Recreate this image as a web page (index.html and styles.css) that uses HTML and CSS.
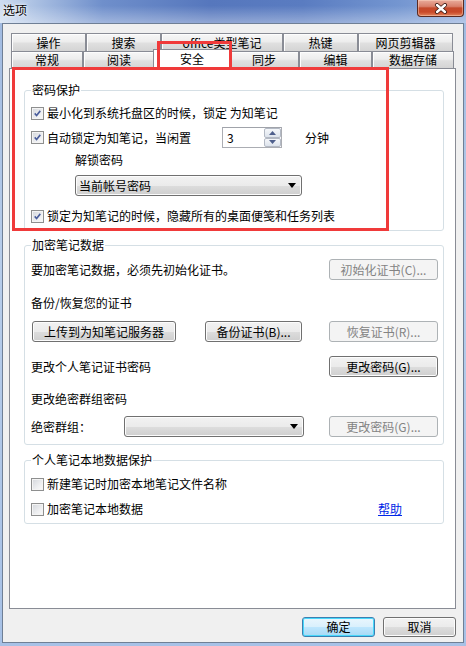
FILE: index.html
```html
<!DOCTYPE html>
<html lang="zh-CN">
  <head>
    <meta charset="UTF-8" />
    <title>选项</title>
    <link rel="stylesheet" href="styles.css">
  </head>
  <body>
    <div class="window">
      <div class="titlebar">
        <span class="title">选项</span>
        <div class="close">
          <svg width="14" height="11" viewBox="0 0 14 11">
            <path d="M3 2 L11 9 M11 2 L3 9" stroke="#3a1a14" stroke-width="4" stroke-linecap="round" />
            <path d="M3 2 L11 9 M11 2 L3 9" stroke="#ffffff" stroke-width="2.4" stroke-linecap="round" />
          </svg>
        </div>
      </div>

      <div class="client">
        <div class="tabrow row-back">
          <div class="tab t-op">操作</div>
          <div class="tab t-search">搜索</div>
          <div class="tab t-office">office类型笔记</div>
          <div class="tab t-hotkey">热键</div>
          <div class="tab t-clip">网页剪辑器</div>
        </div>
        <div class="tabrow row-front">
          <div class="tab t-general">常规</div>
          <div class="tab t-read">阅读</div>
          <div class="tab t-safe active">安全</div>
          <div class="tab t-sync">同步</div>
          <div class="tab t-edit">编辑</div>
          <div class="tab t-store">数据存储</div>
        </div>

        <div class="panel">
          <fieldset class="group g-lock">
            <legend>密码保护</legend>
            <div class="row r1">
              <span class="cb checked"><svg viewBox="0 0 13 13"><path d="M3.2 6.4 L5.4 8.8 L9.8 3.4" /></svg></span>
              <span class="cb-text">最小化到系统托盘区的时候，锁定 为知笔记</span>
            </div>
            <div class="row r2">
              <div class="idle-label">
                <span class="cb checked"><svg viewBox="0 0 13 13"><path d="M3.2 6.4 L5.4 8.8 L9.8 3.4" /></svg></span>
                <span class="cb-text">自动锁定为知笔记，当闲置</span>
              </div>
              <div class="spinner">
                <span class="spin-value">3</span>
                <div class="spin-buttons">
                  <span class="spin-btn"><svg width="7" height="4" viewBox="0 0 7 4"><path d="M0 4 L3.5 0 L7 4 Z" fill="#4e5f8c" /></svg></span>
                  <span class="spin-btn"><svg width="7" height="4" viewBox="0 0 7 4"><path d="M0 0 L3.5 4 L7 0 Z" fill="#4e5f8c" /></svg></span>
                </div>
              </div>
              <span class="minutes">分钟</span>
            </div>
            <div class="row r3">解锁密码</div>
            <div class="row r4">
              <div class="select sel-unlock">
                <span>当前帐号密码</span>
                <svg width="8" height="5" viewBox="0 0 8 5"><path d="M0 0 L8 0 L4 5 Z" fill="#000" /></svg>
              </div>
            </div>
            <div class="row r5">
              <span class="cb checked"><svg viewBox="0 0 13 13"><path d="M3.2 6.4 L5.4 8.8 L9.8 3.4" /></svg></span>
              <span class="cb-text">锁定为知笔记的时候，隐藏所有的桌面便笺和任务列表</span>
            </div>
          </fieldset>

          <fieldset class="group g-encrypt">
            <legend>加密笔记数据</legend>
            <div class="row ra">
              <span>要加密笔记数据，必须先初始化证书。</span>
              <button class="btn disabled w-right">初始化证书(C)...</button>
            </div>
            <div class="row rb">备份/恢复您的证书</div>
            <div class="row rc">
              <button class="btn w-upload">上传到为知笔记服务器</button>
              <button class="btn w-backup">备份证书(B)...</button>
              <button class="btn disabled w-right">恢复证书(R)...</button>
            </div>
            <div class="row rd">
              <span>更改个人笔记证书密码</span>
              <button class="btn w-right">更改密码(G)...</button>
            </div>
            <div class="row re">更改绝密群组密码</div>
            <div class="row rf">
              <span class="group-label">绝密群组：</span>
              <div class="select sel-group">
                <span></span>
                <svg width="8" height="5" viewBox="0 0 8 5"><path d="M0 0 L8 0 L4 5 Z" fill="#000" /></svg>
              </div>
              <button class="btn disabled w-right">更改密码(G)...</button>
            </div>
          </fieldset>

          <fieldset class="group g-local">
            <legend>个人笔记本地数据保护</legend>
            <div class="row rl1">
              <span class="cb"></span>
              <span class="cb-text">新建笔记时加密本地笔记文件名称</span>
            </div>
            <div class="row rl2">
              <span class="cb"></span>
              <span class="cb-text">加密笔记本地数据</span>
              <a class="help" href="#">帮助</a>
            </div>
          </fieldset>
        </div>

        <div class="actions">
          <button class="btn default w-action">确定</button>
          <button class="btn w-action">取消</button>
        </div>
      </div>

      <!-- red annotation boxes drawn over the screenshot -->
      <div class="mark mark-tab"></div>
      <div class="mark mark-group"></div>
    </div>
  </body>
</html>
```

FILE: styles.css
```css
* {
  box-sizing: border-box;
}

html,
body {
  margin: 0;
  padding: 0;
}

body {
  width: 466px;
  height: 646px;
  overflow: hidden;
}

.window {
  position: relative;
  width: 466px;
  height: 646px;
  font-family: "Noto Sans CJK SC", "Noto Sans", sans-serif;
  font-size: 12px;
  color: #000;
  background: linear-gradient(to bottom, #9fb9e0, #b7cdea 40%, #a7c1e6);
  overflow: hidden;
}

/* title bar */
.titlebar {
  height: 23px;
  display: flex;
  justify-content: space-between;
  align-items: flex-start;
  padding-left: 3px;
  padding-right: 2px;
  background:
    linear-gradient(to bottom, rgba(255, 255, 255, 0) 25%, rgba(255, 255, 255, 0.35) 100%),
    linear-gradient(to right, #cddcf0 0%, #a9bfe2 8%, #6f8fcb 22%, #5677bd 45%, #5a7cc1 65%, #7395d0 85%, #8eabdc 100%);
}

.title {
  padding-top: 3px;
  line-height: 14px;
  text-shadow: 0 0 4px #fff, 0 0 2px #fff;
}

.close {
  width: 47px;
  height: 17px;
  display: flex;
  align-items: center;
  justify-content: center;
  border: 1px solid #5a2a22;
  border-top: none;
  border-radius: 0 0 4px 4px;
  background: linear-gradient(to bottom, #e9ac9c 0%, #d9806b 40%, #c44a2c 50%, #c9492a 75%, #e2845d 100%);
  box-shadow: inset 0 0 0 1px rgba(255, 220, 200, 0.45);
}

/* client area */
.client {
  height: 620px;
  margin: 0 2px;
  border: 1px solid #6f7f95;
  background: #f0f0f0;
  padding: 9px 7px 0 6px;
}

.tabrow {
  display: flex;
  margin-left: 2px;
}

.row-back {
  height: 18px;
}

.row-front {
  height: 17px;
  align-items: flex-end;
}

.tab {
  height: 100%;
  display: flex;
  align-items: center;
  justify-content: center;
  line-height: 14px;
  border: 1px solid #898c95;
  border-bottom: none;
  background: linear-gradient(to bottom, #f7f7f7 0%, #ededed 45%, #dfdfdf 55%, #d4d4d4 100%);
  box-shadow: inset 1px 1px 0 #fdfdfd;
  white-space: nowrap;
}

.row-front .tab {
  height: 17px;
}

.t-op { width: 75px; }
.t-search { width: 75px; }
.t-office { width: 122px; }
.t-hotkey { width: 75px; }
.t-clip { width: 95px; }

.t-general { width: 72px; }
.t-read { width: 72px; }
.t-sync { width: 70px; }
.t-edit { width: 73px; }
.t-store { width: 82px; }

.row-front .tab.active {
  position: relative;
  width: 78px;
  height: 20px;
  margin: 0 -2px -1px -2px;
  padding-bottom: 1px;
  background: #fff;
  box-shadow: none;
}

/* tab page */
.panel {
  height: 541px;
  border: 1px solid #898c95;
  background: #fff;
  padding: 13px 11px 0 14px;
}

.group {
  margin: 0;
  min-width: 0;
  border: 1px solid #d5dfe5;
  border-radius: 3px;
  padding: 0 5px 0 6px;
}

.group legend {
  padding: 0 1px;
  line-height: 16px;
}

.g-lock {
  padding-top: 5px;
  padding-bottom: 4px;
}

.g-encrypt {
  margin-top: 6px;
  padding-top: 6px;
  padding-bottom: 7px;
}

.g-local {
  margin-top: 7px;
  padding-top: 6px;
  padding-bottom: 4px;
}

.row {
  display: flex;
  align-items: center;
  line-height: 14px;
  white-space: nowrap;
}

.r1 { height: 20px; }
.r2 { height: 21px; margin-top: 4px; }
.r3 { height: 18px; margin-top: 3px; padding-left: 44px; }
.r4 { height: 21px; margin-top: 6px; padding-left: 44px; }
.r5 { height: 20px; margin-top: 10px; }

.ra { height: 21px; }
.rb { height: 21px; margin-top: 12px; }
.rc { height: 21px; margin-top: 8px; }
.rd { height: 21px; margin-top: 14px; }
.re { height: 21px; margin-top: 11px; }
.rf { height: 21px; margin-top: 7px; }

.rl1 { height: 20px; }
.rl2 { height: 20px; margin-top: 5px; }

/* checkbox */
.cb {
  flex: none;
  width: 13px;
  height: 13px;
  border: 1px solid #8e8f8f;
  background: linear-gradient(135deg, #d3d6db 0%, #eeeff1 60%, #fbfbfb 100%);
  box-shadow: inset 0 0 0 1px #f4f4f4;
  display: flex;
}

.cb svg {
  width: 11px;
  height: 11px;
}

.cb path {
  fill: none;
  stroke: #4a5e9c;
  stroke-width: 1.9;
}

.cb-text {
  margin-left: 3px;
}

.idle-label {
  width: 191px;
  display: flex;
  align-items: center;
}

/* spin box */
.spinner {
  width: 60px;
  height: 21px;
  display: flex;
  border: 1px solid #abadb3;
  border-top-color: #a0a3aa;
  background: #fff;
}

.spin-value {
  flex: 1;
  padding-left: 4px;
  line-height: 19px;
}

.spin-buttons {
  width: 17px;
  display: flex;
  flex-direction: column;
}

.spin-btn {
  flex: 1;
  display: flex;
  align-items: center;
  justify-content: center;
  border: 1px solid #b3b9c4;
  border-radius: 2px;
  background: linear-gradient(to bottom, #f5f7fa, #dde3ec);
}

.minutes {
  margin-left: 23px;
}

/* drop-down */
.select {
  height: 21px;
  display: flex;
  align-items: center;
  justify-content: space-between;
  padding: 0 5px 0 3px;
  border: 1px solid #707070;
  border-radius: 3px;
  background: linear-gradient(to bottom, #f2f2f2 0%, #ebebeb 50%, #dddddd 51%, #cfcfcf 100%);
  box-shadow: inset 0 0 0 1px #fcfcfc;
}

.sel-unlock {
  width: 227px;
}

.sel-group {
  width: 180px;
}

.group-label {
  width: 93px;
}

/* buttons */
.btn {
  height: 21px;
  padding: 0;
  font-family: inherit;
  font-size: 12px;
  line-height: 14px;
  color: #000;
  border: 1px solid #707070;
  border-radius: 3px;
  background: linear-gradient(to bottom, #f2f2f2 0%, #ebebeb 50%, #dddddd 51%, #cfcfcf 100%);
  box-shadow: inset 0 0 0 1px #fcfcfc;
  white-space: nowrap;
}

.btn.disabled {
  color: #838383;
  border-color: #adb2b5;
  background: #f4f4f4;
  box-shadow: none;
}

.w-right {
  width: 109px;
  margin-left: auto;
}

.w-upload {
  width: 144px;
  margin-left: 1px;
}

.w-backup {
  width: 97px;
  margin-left: 29px;
}

.help {
  margin-left: auto;
  margin-right: 36px;
  color: #0026e6;
}

/* dialog buttons */
.actions {
  display: flex;
  justify-content: flex-end;
  gap: 8px;
  margin-top: 8px;
}

.w-action {
  width: 73px;
  height: 20px;
}

.btn.default {
  border-color: #3c7fb1;
  background: linear-gradient(to bottom, #eaf6fd 0%, #d9f0fc 50%, #bee6fd 51%, #a7d9f5 100%);
  box-shadow: inset 0 0 0 1px #48d8fb;
}

/* annotation */
.mark {
  position: absolute;
  border: 3px solid #f03a3a;
}

.mark-tab {
  left: 157px;
  top: 41px;
  width: 75px;
  height: 29px;
}

.mark-group {
  left: 12px;
  top: 67px;
  width: 377px;
  height: 164px;
}
```
